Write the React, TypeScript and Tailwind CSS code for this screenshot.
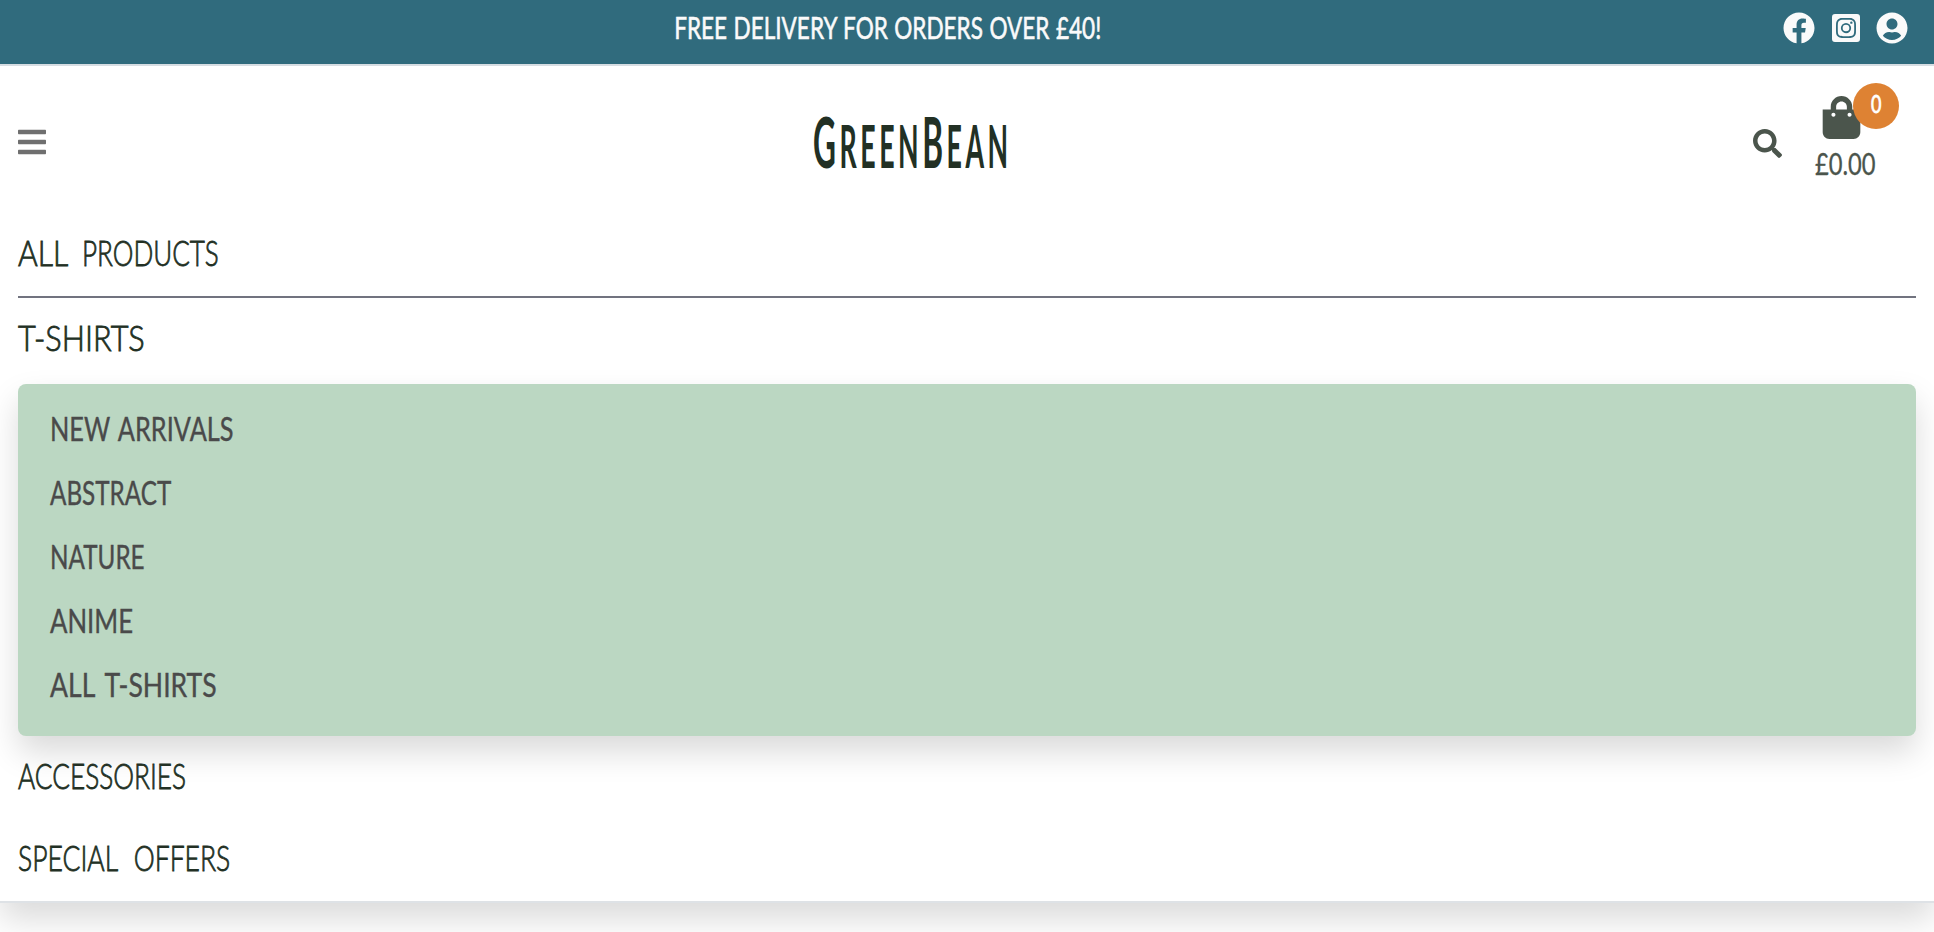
import { FaBars, FaFacebook, FaInstagramSquare, FaSearch, FaShoppingBag, FaUserCircle } from "react-icons/fa";

const categories = [
  { label: "NEW ARRIVALS", fit: "scale-x-[0.768] [word-spacing:3px]" },
  { label: "ABSTRACT", fit: "scale-x-[0.735]" },
  { label: "NATURE", fit: "scale-x-[0.735]" },
  { label: "ANIME", fit: "scale-x-[0.78]" },
  { label: "ALL T-SHIRTS", fit: "scale-x-[0.805] [word-spacing:5px]" },
];

const handText =
  "inline-block origin-left whitespace-nowrap font-light text-[35px] leading-[42px] text-[#223024] [-webkit-text-stroke:0.8px_#223024]";

function TopBar() {
  return (
    <div className="flex h-[66px] border-b-2 border-[#d6dde2] bg-[#306b7d]">
      <div className="w-[1776px] pt-[9px] text-center">
        <span className="inline-block scale-x-[0.727] whitespace-nowrap text-[31px] leading-[37px] text-[#fafafa] [-webkit-text-stroke:0.6px_#fafafa] [word-spacing:1px]">
          FREE DELIVERY FOR ORDERS OVER £40!
        </span>
      </div>
      <div className="flex h-14 items-center text-[32px] text-[#fafafa]">
        <a href="#" aria-label="Facebook" className="ml-[7px] w-8"><FaFacebook /></a>
        <a href="#" aria-label="Instagram" className="ml-[15px] w-8"><FaInstagramSquare /></a>
        <a href="#" aria-label="Account" className="ml-[14px] w-8"><FaUserCircle /></a>
      </div>
    </div>
  );
}

function Header() {
  return (
    <header className="grid h-[146px] grid-cols-[1fr_192px_1fr] items-center pl-[18px] pr-[18px]">
      <button aria-label="Menu" className="mt-[6px] -ml-[2px] w-8 text-[32px] text-[#6f6f6f]">
        <FaBars />
      </button>
      <a href="#" className="ml-[-58px] mt-[7px] inline-block w-[192px] origin-left scale-x-[0.445] whitespace-nowrap text-[71px] font-bold leading-[85px] tracking-[8px] text-[#223024]">
        G<span className="text-[60px]">REEN</span>B<span className="text-[60px]">EAN</span>
      </a>
      <div className="flex h-full justify-end text-[#4b554c]">
        <FaSearch className="mt-[63px] text-[29px]" />
        <a href="#" className="relative ml-[33px] mr-10 flex w-[61px] flex-col pt-[30px]">
          <FaShoppingBag className="ml-[5px] text-[43px]" />
          <span className="mt-[6px] inline-block origin-left scale-x-[0.765] whitespace-nowrap text-[31px] leading-[37px] [-webkit-text-stroke:0.3px_#4b554c]">£0.00</span>
          <span className="absolute left-[38px] top-[17px] flex size-[46px] justify-center rounded-full bg-[#de8233] pt-1 text-[25px] leading-8 text-white">
            <span className="inline-block scale-x-[0.72] [-webkit-text-stroke:0.8px_white]">0</span>
          </span>
        </a>
      </div>
    </header>
  );
}

export default function App() {
  return (
    <div className="h-[932px] overflow-hidden bg-white font-['Lato',sans-serif]">
      <div className="h-[903px] border-b-2 border-[#dee2e6] bg-white shadow-[0_16px_32px_rgba(0,0,0,0.15)]">
        <TopBar />
        <Header />
        <nav className="px-[18px]">
          <div className="flex h-[86px] items-center border-b-2 border-[#71737f] pb-1">
            <a href="#" className="whitespace-pre">
              <span className={`${handText} w-16 scale-x-[0.86]`}>ALL </span>
              <span className={`${handText} scale-x-[0.745]`}>PRODUCTS</span>
            </a>
          </div>
          <div className="mb-[9px] flex h-[77px] items-center">
            <a href="#" className={`${handText} scale-x-[0.878]`}>T-SHIRTS</a>
          </div>
          <ul className="h-[352px] rounded-lg bg-[#bbd7c2] pl-8 pt-3 shadow-[0_16px_32px_rgba(0,0,0,0.15)]">
            {categories.map((item) => (
              <li key={item.label} className="flex h-16 items-center">
                <a href="#" className={`inline-block origin-left whitespace-nowrap text-[33px] leading-10 text-[#4a4a4a] [-webkit-text-stroke:0.4px_#4a4a4a] ${item.fit}`}>
                  {item.label}
                </a>
              </li>
            ))}
          </ul>
          <div className="flex h-[77px] items-center">
            <a href="#" className={`${handText} scale-x-[0.75]`}>ACCESSORIES</a>
          </div>
          <div className="mt-[3px] flex h-[81px] items-center">
            <a href="#" className={`${handText} scale-x-[0.758] [word-spacing:12px]`}>SPECIAL OFFERS</a>
          </div>
        </nav>
      </div>
    </div>
  );
}
